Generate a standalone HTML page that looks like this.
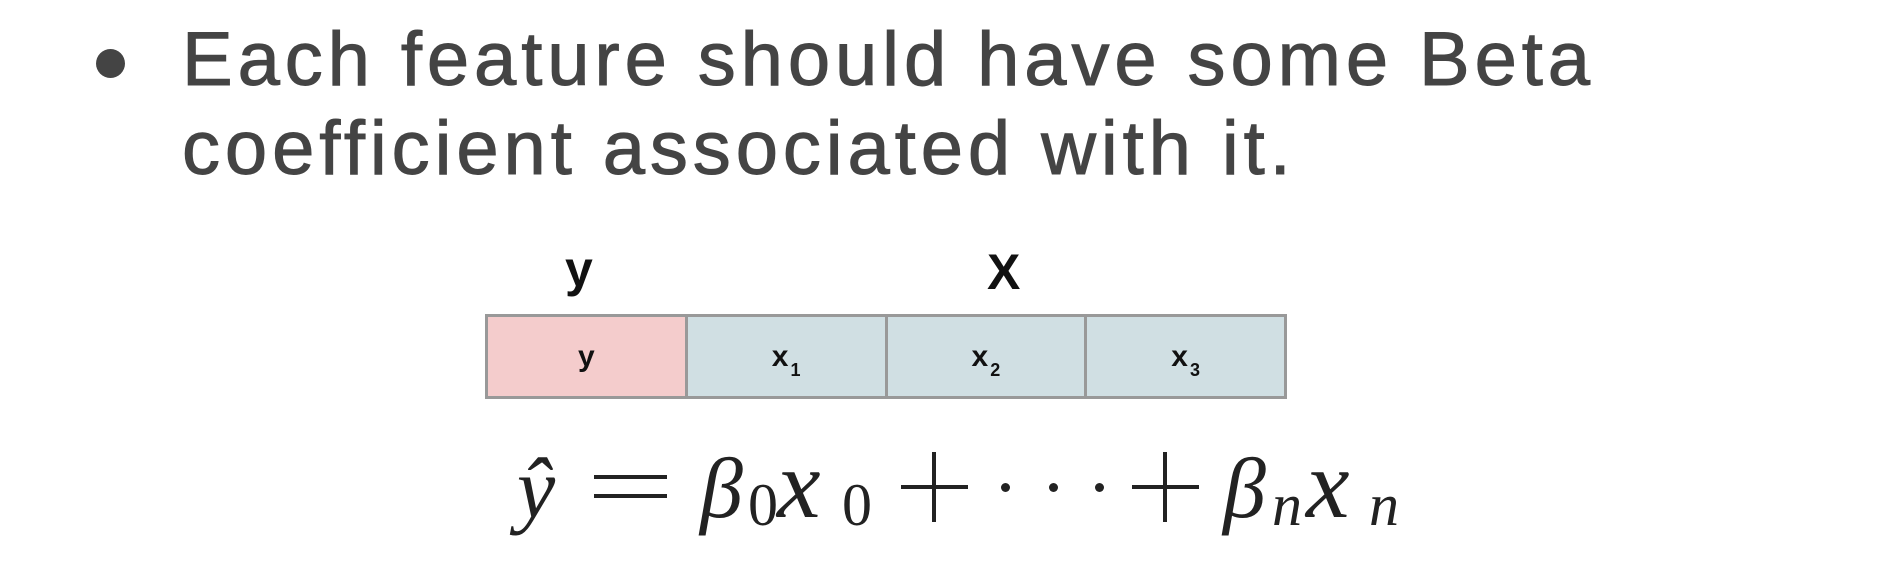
<!DOCTYPE html>
<html><head><meta charset="utf-8"><style>
html,body{margin:0;padding:0;background:#fff;width:1899px;height:574px;overflow:hidden;position:relative}
.t{position:absolute;font-family:"Liberation Sans",sans-serif;color:#444;font-size:76px;letter-spacing:4.9px;white-space:nowrap;line-height:1;-webkit-text-stroke:1px #444}
.b{position:absolute;left:96px;top:49px;width:29px;height:29px;border-radius:50%;background:#444}
.lab{position:absolute;font-family:"Liberation Sans",sans-serif;font-weight:bold;font-size:50px;color:#111;line-height:1}
.row{position:absolute;left:485px;top:314px;width:796px;height:79px;border:3px solid #999;display:flex}
.c{flex:1;background:#d0dfe3;border-left:3px solid #999;display:flex;align-items:center;justify-content:center;font-family:"Liberation Sans",sans-serif;font-weight:bold;font-size:30px;color:#111}
.c:first-child{border-left:none;background:#f4cccc}
.c span{font-size:18px;position:relative;top:14px;margin-left:2px}
.f{position:absolute;font-family:"Liberation Serif",serif;font-size:86px;color:#222;white-space:nowrap;line-height:1;top:445px;font-style:italic}
.s{position:absolute;font-family:"Liberation Serif",serif;font-size:60px;color:#222;line-height:1;top:475px}
.h{position:absolute;background:#222}
.d{position:absolute;width:9px;height:9px;border-radius:50%;background:#222;top:483px}
</style></head><body>
<div class="b"></div>
<div class="t" style="left:182px;top:22px">Each feature should have some Beta</div>
<div class="t" style="left:182px;top:111px">coefficient associated with it.</div>
<div class="lab" style="left:565px;top:244px">y</div>
<div class="lab" style="left:987px;top:247px">X</div>
<div class="row">
<div class="c">y</div>
<div class="c">x<span>1</span></div>
<div class="c">x<span>2</span></div>
<div class="c">x<span>3</span></div>
</div>
<div class="f" style="left:517px">ŷ</div>
<div class="h" style="left:594px;top:475px;width:73px;height:4px"></div>
<div class="h" style="left:594px;top:494px;width:73px;height:4px"></div>
<div class="f" style="left:700px">β</div>
<div class="s" style="left:748px">0</div>
<div class="f" style="left:777px;font-size:98px;top:436px">x</div>
<div class="s" style="left:842px">0</div>
<div class="h" style="left:901px;top:485px;width:67px;height:4px"></div>
<div class="h" style="left:932px;top:452px;width:4px;height:70px"></div>
<div class="d" style="left:1001px"></div>
<div class="d" style="left:1049px"></div>
<div class="d" style="left:1095px"></div>
<div class="h" style="left:1132px;top:485px;width:67px;height:4px"></div>
<div class="h" style="left:1163px;top:452px;width:4px;height:70px"></div>
<div class="f" style="left:1223px">β</div>
<div class="s" style="left:1272px;font-style:italic">n</div>
<div class="f" style="left:1306px;font-size:98px;top:436px">x</div>
<div class="s" style="left:1369px;font-style:italic">n</div>
</body></html>
